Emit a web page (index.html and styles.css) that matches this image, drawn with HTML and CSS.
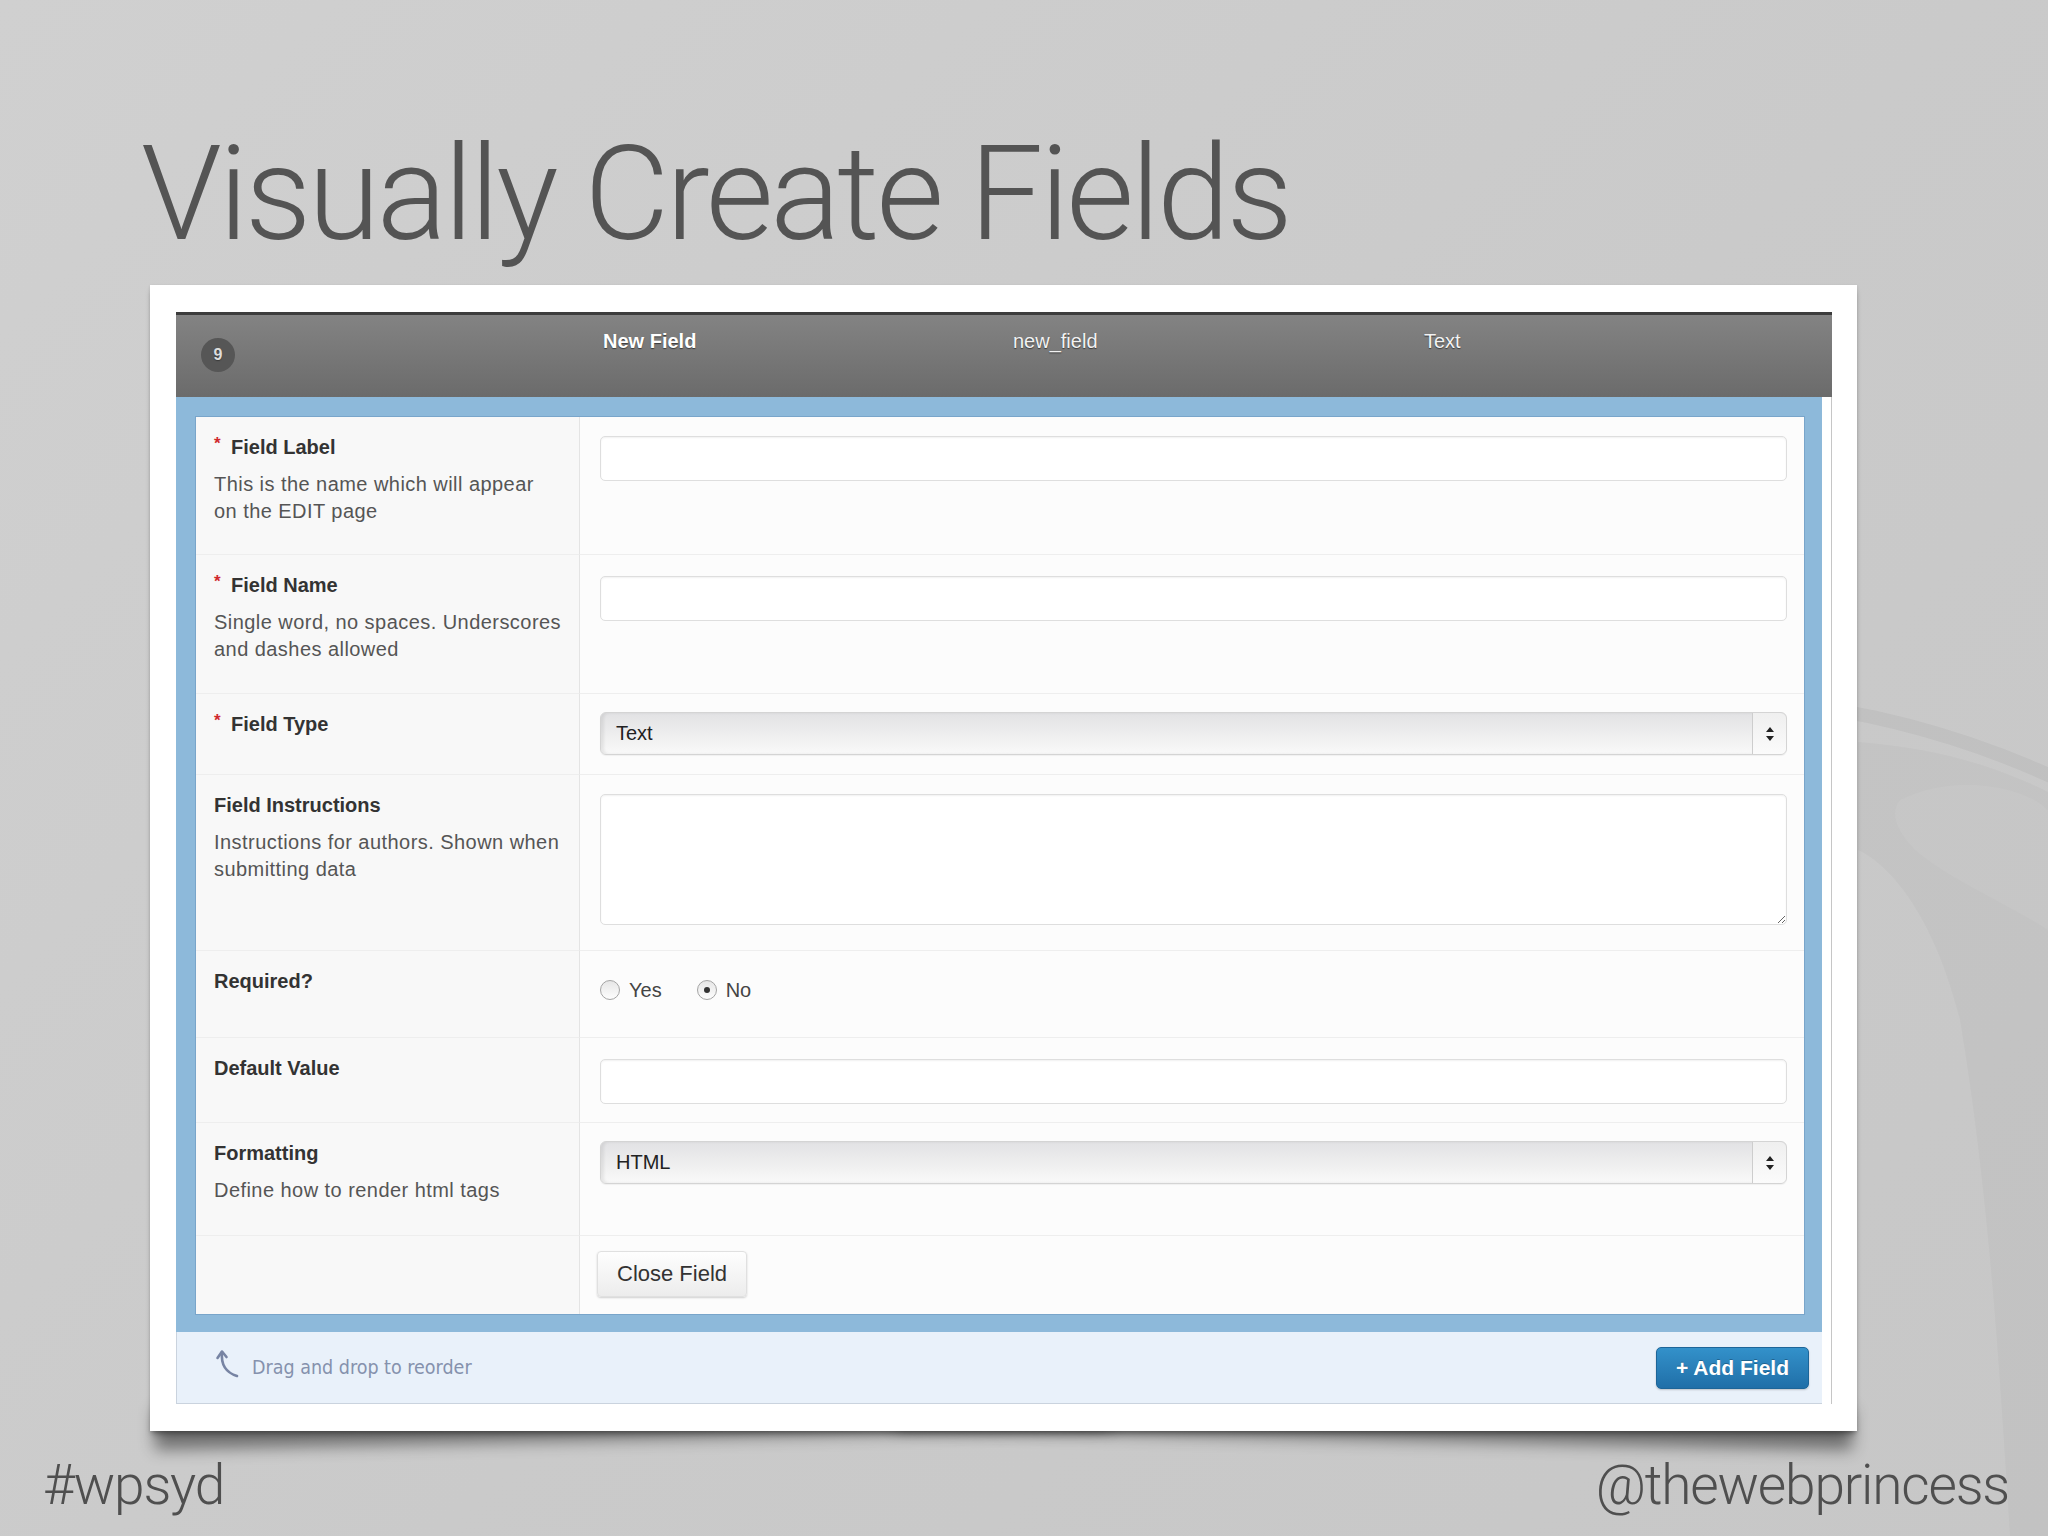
FILE: index.html
```html
<!DOCTYPE html>
<html lang="en">
<head>
    <meta charset="UTF-8">
    <title>Visually Create Fields</title>
    <link rel="stylesheet" href="styles.css">
</head>
<body>
<div class="slide">
    <svg class="watermark" width="2048" height="1536" viewBox="0 0 2048 1536">
        <path d="M1760 700 A 905 905 0 0 1 2100 800" fill="none" stroke="rgba(0,0,0,0.04)" stroke-width="14"/>
        <path d="M1858 742 C 1940 748, 2000 768, 2048 792 L 2048 1536 L 2010 1536 C 2000 1380, 1990 1200, 1960 1020 C 1930 900, 1880 860, 1858 850 Z" fill="rgba(0,0,0,0.022)"/>
        <path d="M1900 800 C 1960 770, 2030 790, 2048 810 L 2048 930 C 2000 900, 1950 880, 1915 850 C 1895 830, 1890 812, 1900 800 Z" fill="rgba(255,255,255,0.05)"/>
    </svg>

    <h1 class="title">Visually Create Fields</h1>

    <div class="shot">
        <div class="acf">
            <div class="acf-head">
                <div class="head-col"><div class="badge">9</div></div>
                <div class="head-col head-label">New Field</div>
                <div class="head-col">new_field</div>
                <div class="head-col">Text</div>
            </div>

            <div class="acf-main">
                <div class="acf-body">
                    <div class="form">
                        <div class="label-cell">
                            <div class="label"><span class="req">*</span>Field Label</div>
                            <div class="desc">This is the name which will appear<br>on the EDIT page</div>
                        </div>
                        <div class="value-cell"><input class="text-input" type="text"></div>

                        <div class="label-cell">
                            <div class="label"><span class="req">*</span>Field Name</div>
                            <div class="desc">Single word, no spaces. Underscores<br>and dashes allowed</div>
                        </div>
                        <div class="value-cell field-name"><input class="text-input" type="text"></div>

                        <div class="label-cell">
                            <div class="label"><span class="req">*</span>Field Type</div>
                        </div>
                        <div class="value-cell select-cell">
                            <div class="select">
                                <span class="select-text">Text</span>
                                <span class="select-arrows">
                                    <svg width="10" height="16" viewBox="0 0 10 16"><path d="M5 1 L9 6 L1 6 Z M5 15 L9 10 L1 10 Z" fill="#222"/></svg>
                                </span>
                            </div>
                        </div>

                        <div class="label-cell">
                            <div class="label">Field Instructions</div>
                            <div class="desc">Instructions for authors. Shown when<br>submitting data</div>
                        </div>
                        <div class="value-cell"><textarea class="text-area"></textarea></div>

                        <div class="label-cell">
                            <div class="label">Required?</div>
                        </div>
                        <div class="value-cell radio-cell">
                            <label class="radio"><span class="radio-dot"></span>Yes</label>
                            <label class="radio"><span class="radio-dot checked"></span>No</label>
                        </div>

                        <div class="label-cell">
                            <div class="label">Default Value</div>
                        </div>
                        <div class="value-cell field-name"><input class="text-input" type="text"></div>

                        <div class="label-cell">
                            <div class="label">Formatting</div>
                            <div class="desc">Define how to render html tags</div>
                        </div>
                        <div class="value-cell select-cell">
                            <div class="select">
                                <span class="select-text">HTML</span>
                                <span class="select-arrows">
                                    <svg width="10" height="16" viewBox="0 0 10 16"><path d="M5 1 L9 6 L1 6 Z M5 15 L9 10 L1 10 Z" fill="#222"/></svg>
                                </span>
                            </div>
                        </div>

                        <div class="label-cell last"></div>
                        <div class="value-cell last button-cell"><button class="close-btn">Close Field</button></div>
                    </div>
                </div>

                <div class="acf-foot">
                    <div class="drag-hint">
                        <svg class="drag-arrow" width="28" height="32" viewBox="0 0 28 32">
                            <path d="M7 4 C 6 14, 9 24, 22 28" fill="none" stroke="#7784a3" stroke-width="2.6" stroke-linecap="round"/>
                            <path d="M2.5 10 L7 3.5 L11.5 9" fill="none" stroke="#7784a3" stroke-width="2.6" stroke-linecap="round" stroke-linejoin="round"/>
                        </svg>
                        <span>Drag and drop to reorder</span>
                    </div>
                    <button class="add-btn">+ Add Field</button>
                </div>
            </div>
        </div>
    </div>

    <div class="slide-foot">
        <span>#wpsyd</span>
        <span>@thewebprincess</span>
    </div>
</div>
</body>
</html>
```

FILE: styles.css
```css
body {
    margin: 0;
    background: #cbcbcb;
    font-family: "Liberation Sans", Arial, sans-serif;
}

.slide {
    position: relative;
    z-index: 0;
    width: 2048px;
    height: 1536px;
    overflow: hidden;
    background: linear-gradient(135deg, #d0d0d0 0%, #cacaca 55%, #c7c7c7 100%);
}

.watermark {
    position: absolute;
    left: 0;
    top: 0;
}

.title {
    position: relative;
    margin: 0;
    padding: 129px 0 0 141px;
    font-family: Roboto, "Liberation Sans", sans-serif;
    font-weight: 300;
    font-size: 131px;
    line-height: 131px;
    letter-spacing: -3.2px;
    color: #545454;
}

/* Screenshot card */
.shot {
    position: relative;
    box-sizing: border-box;
    width: 1707px;
    height: 1146px;
    margin: 25px 0 0 150px;
    padding: 27px 25px 0 26px;
    background: #fff;
    box-shadow: 0 5px 6px -2px rgba(0, 0, 0, 0.35), 0 1px 3px rgba(0, 0, 0, 0.12);
}

/* curled page shadow under the corners */
.shot::before,
.shot::after {
    content: "";
    position: absolute;
    z-index: -1;
    bottom: 16px;
    width: 56%;
    height: 40px;
    box-shadow: 0 24px 16px rgba(0, 0, 0, 0.45);
}

.shot::before {
    left: 4px;
    transform: rotate(-1.3deg);
}

.shot::after {
    right: 4px;
    transform: rotate(1.3deg);
}

.acf-head {
    display: grid;
    grid-template-columns: 427px 410px 411px 1fr;
    box-sizing: border-box;
    height: 85px;
    padding-top: 14px;
    border-top: 3px solid #3c3c3c;
    background: linear-gradient(#838383, #6b6b6b);
    color: #f2f2f2;
    font-size: 20px;
    line-height: 24px;
    text-shadow: 0 1px 1px #3a3a3a;
}

.head-label {
    font-weight: bold;
    color: #fff;
}

.badge {
    width: 34px;
    height: 34px;
    margin: 9px 0 0 25px;
    border-radius: 50%;
    background: #565656;
    color: #ddd;
    font-size: 16px;
    font-weight: bold;
    line-height: 34px;
    text-align: center;
}

.acf-main {
    padding-right: 9px;
    border-right: 1px solid #c6c6c6;
}

.acf-body {
    padding: 20px 18px 18px 20px;
    background: #8db9da;
}

.form {
    display: grid;
    grid-template-columns: 384px 1fr;
    grid-template-rows: 138px 139px 81px 176px 87px 85px 113px 78px;
    background: #fcfcfc;
    box-shadow: 0 0 0 1px #79a5ca;
}

.label-cell {
    box-sizing: border-box;
    padding: 18px 8px 0 18px;
    background: #f8f8f8;
    border-right: 1px solid #e4e4e4;
    border-bottom: 1px solid #eeeeee;
}

.value-cell {
    box-sizing: border-box;
    padding: 19px 17px 0 20px;
    border-bottom: 1px solid #eeeeee;
}

.field-name {
    padding-top: 21px;
}

.select-cell {
    padding-top: 18px;
}

.last {
    border-bottom: none;
}

.label {
    font-size: 20px;
    line-height: 24px;
    font-weight: bold;
    color: #333;
}

.req {
    display: inline-block;
    width: 17px;
    color: #d0282e;
    font-size: 17px;
    vertical-align: top;
    line-height: 18px;
}

.desc {
    margin-top: 12px;
    font-size: 20px;
    line-height: 27px;
    letter-spacing: 0.45px;
    color: #555;
    white-space: nowrap;
}

.text-input {
    display: block;
    box-sizing: border-box;
    width: 100%;
    height: 45px;
    margin: 0;
    border: 1px solid #dedede;
    border-radius: 5px;
    background: #fff;
    box-shadow: inset 0 1px 2px rgba(0, 0, 0, 0.06);
}

.text-area {
    display: block;
    box-sizing: border-box;
    width: 100%;
    height: 131px;
    margin: 0;
    border: 1px solid #dedede;
    border-radius: 5px;
    background: #fff;
    box-shadow: inset 0 1px 2px rgba(0, 0, 0, 0.06);
}

.select {
    display: flex;
    align-items: center;
    box-sizing: border-box;
    height: 43px;
    border: 1px solid #d4d4d4;
    border-radius: 6px;
    background: linear-gradient(#e2e2e4, #f1f1f1 65%, #f9f9f9);
    box-shadow: inset 3px 0 3px rgba(0, 0, 0, 0.07), 0 1px 1px rgba(0, 0, 0, 0.05);
    font-size: 20px;
    color: #222;
}

.select-text {
    flex: 1;
    padding-left: 15px;
}

.select-arrows {
    display: flex;
    align-items: center;
    justify-content: center;
    width: 33px;
    height: 100%;
    border-left: 1px solid #cdcdcd;
    border-radius: 0 6px 6px 0;
    background: linear-gradient(#efefef, #fbfbfb);
}

.radio-cell {
    display: flex;
    align-items: flex-start;
    padding-top: 19px;
    font-size: 20px;
    line-height: 40px;
    color: #444;
}

.radio {
    display: flex;
    align-items: center;
    gap: 9px;
    margin-right: 35px;
}

.radio-dot {
    position: relative;
    box-sizing: border-box;
    width: 20px;
    height: 20px;
    border: 1px solid #a4a4a4;
    border-radius: 50%;
    background: linear-gradient(#e6e6e6, #fdfdfd);
}

.radio-dot.checked::after {
    content: "";
    position: absolute;
    left: 6px;
    top: 6px;
    width: 6px;
    height: 6px;
    border-radius: 50%;
    background: #333;
}

.button-cell {
    padding: 15px 0 0 17px;
}

.close-btn {
    height: 46px;
    padding: 0 19px;
    border: 1px solid #e0e0e0;
    border-radius: 4px;
    background: linear-gradient(#fefefe, #ececec);
    box-shadow: 0 1px 2px rgba(0, 0, 0, 0.18);
    font-family: "Liberation Sans", Arial, sans-serif;
    font-size: 22px;
    color: #333;
}

/* Footer strip */
.acf-foot {
    display: flex;
    align-items: center;
    justify-content: space-between;
    box-sizing: border-box;
    height: 72px;
    padding: 0 13px 0 38px;
    background: #e9f1fa;
    border-left: 1px solid #cad3de;
    border-bottom: 1px solid #cad3de;
}

.drag-hint {
    display: flex;
    align-items: center;
    gap: 9px;
    font-family: "DejaVu Sans Condensed", "DejaVu Sans", sans-serif;
    font-size: 19.5px;
    color: #8591ad;
}

.drag-arrow {
    margin-top: -8px;
}

.add-btn {
    height: 42px;
    padding: 0 19px;
    border: 1px solid #1d6598;
    border-radius: 5px;
    background: linear-gradient(#3391ca, #206fa8);
    box-shadow: 0 1px 2px rgba(0, 0, 0, 0.2);
    font-family: "Liberation Sans", Arial, sans-serif;
    font-size: 21px;
    font-weight: bold;
    color: #fff;
    text-shadow: 0 -1px 0 rgba(0, 0, 0, 0.25);
}

.slide-foot {
    position: relative;
    display: flex;
    justify-content: space-between;
    margin-top: 27px;
    padding: 0 39px 0 43px;
    font-family: Roboto, "Liberation Sans", sans-serif;
    font-weight: 300;
    font-size: 55px;
    line-height: 55px;
    letter-spacing: -1.2px;
    color: #4f4f4f;
}
```
